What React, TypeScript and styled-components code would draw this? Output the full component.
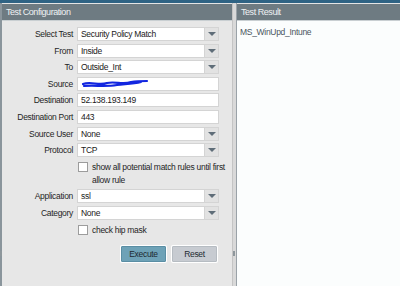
import React from 'react';
import styled, { createGlobalStyle } from 'styled-components';

const FONT = '"Liberation Sans", Arial, sans-serif';

/* GLOBAL */
const GlobalStyle = createGlobalStyle`
  * { box-sizing: border-box; }
  body {
    margin: 0;
    overflow: hidden;
    font-family: ${FONT};
    letter-spacing: -0.3px;
  }
`;

/* STYLES */
const Page = styled.div`
  width: 400px;
  height: 286px;
  display: flex;
  flex-direction: column;
  background: #e8e8e8;
`;

const TopBar = styled.div`
  height: 3px;
  background: #2f6384;
`;

const Panels = styled.div`
  flex: 1;
  display: flex;
`;

const LeftPanel = styled.div`
  width: 232px;
  display: flex;
  flex-direction: column;
  background: #e7e7e7;
  border-left: 2px solid #8a959c;
  position: relative;
`;

const Splitter = styled.div`
  width: 5px;
  background: #d9d9d9;
  border-left: 1px solid #c4c4c4;
  border-right: 1px solid #9aa2a8;
  position: relative;
`;

const RightPanel = styled.div`
  flex: 1;
  display: flex;
  flex-direction: column;
  background: #fbfdfd;
`;

const Header = styled.div`
  height: 18px;
  line-height: 16px;
  padding-left: 4px;
  background: #6e7b82;
  color: #eef2f4;
  font-size: 9px;
  letter-spacing: -0.45px;
  border-top: 1px solid #e4e4e4;
  border-bottom: 1px solid #c9cfd2;
`;

const Handle = styled.span`
  position: absolute;
  top: 248px;
  left: ${(p: { left: number }) => p.left}px;
  width: 2px;
  height: 5px;
  background: #8e979c;
`;

const Form = styled.div`
  display: grid;
  grid-template-columns: 71px 142px;
  column-gap: 4px;
  row-gap: 2.6px;
  padding: 6px 0 0 0;
  align-items: center;
`;

const Label = styled.label`
  text-align: right;
  font-size: 8.5px;
  color: #1f1f1f;
  white-space: nowrap;
`;

const Input = styled.div`
  height: 14px;
  border: 1px solid #d4d4d4;
  background: #fff;
  font-size: 8.5px;
  padding-left: 3px;
  color: #1a1a1a;
  display: flex;
  align-items: center;
  overflow: hidden;
`;

const Select = styled.div`
  height: 14px;
  display: flex;
  border: 1px solid #d4d4d4;
  background: #fff;
`;

const SelectValue = styled.span`
  flex: 1;
  font-size: 8.5px;
  line-height: 12px;
  padding-left: 3px;
  color: #1a1a1a;
`;

const Arrow = styled.span`
  width: 14px;
  background: #e2e2e2;
  border-left: 1px solid #d4d4d4;
  display: flex;
  align-items: center;
  justify-content: center;
  &::after {
    content: '';
    border-left: 4px solid transparent;
    border-right: 4px solid transparent;
    border-top: 4px solid #5f6d78;
  }
`;

const CheckRow = styled.div`
  grid-column: 2;
  display: flex;
  align-items: flex-start;
  gap: 4px;
  font-size: 8.5px;
  color: #1f1f1f;
  line-height: 13px;
  white-space: nowrap;
  padding: 1px 0 0 1px;
`;

const Box = styled.span`
  flex: none;
  width: 10px;
  height: 10px;
  margin-top: 1px;
  border: 1px solid #9c9c9c;
  background: #fff;
`;

const Buttons = styled.div`
  display: flex;
  justify-content: flex-end;
  gap: 6px;
  padding: 9px 15px 0 0;
`;

const Button = styled.button`
  width: 45px;
  height: 16px;
  padding: 0;
  font-family: ${FONT};
  font-size: 8.5px;
  letter-spacing: -0.3px;
  color: #1e2a32;
  border: 1px solid ${(p: { primary?: boolean }) => (p.primary ? '#5a8ea4' : '#b6bcc2')};
  background: ${(p: { primary?: boolean }) => (p.primary ? '#6ea2b7' : '#c7cbd1')};
  border-radius: 1px;
  box-shadow: 0 0 0 1px #fff;
`;

const Result = styled.div`
  padding: 6px 0 0 3px;
  font-size: 8.5px;
  color: #4a5560;
`;

/* COMPONENTS */
function SelectField({ value }: { value: string }) {
  return (
    <Select>
      <SelectValue>{value}</SelectValue>
      <Arrow />
    </Select>
  );
}

const Scribble = () => (
  <svg width="70" height="10" viewBox="0 0 70 10">
    <path
      d="M2 5 C10 2 18 7 26 4 C34 2 42 6 50 3 C56 2 62 2 66 2 M3 7 C14 6 24 8 36 6 C44 5 52 5 60 3"
      stroke="#1226e0"
      strokeWidth="2.2"
      fill="none"
      strokeLinecap="round"
    />
  </svg>
);

export default function App() {
  return (
    <Page>
      <GlobalStyle />
      <TopBar />
      <Panels>
        <LeftPanel>
          <Header>Test Configuration</Header>
          <Form>
            <Label>Select Test</Label>
            <SelectField value="Security Policy Match" />
            <Label>From</Label>
            <SelectField value="Inside" />
            <Label>To</Label>
            <SelectField value="Outside_Int" />
            <Label>Source</Label>
            <Input><Scribble /></Input>
            <Label>Destination</Label>
            <Input>52.138.193.149</Input>
            <Label>Destination Port</Label>
            <Input>443</Input>
            <Label>Source User</Label>
            <SelectField value="None" />
            <Label>Protocol</Label>
            <SelectField value="TCP" />
            <CheckRow>
              <Box />
              <span>show all potential match rules until first<br />allow rule</span>
            </CheckRow>
            <Label>Application</Label>
            <SelectField value="ssl" />
            <Label>Category</Label>
            <SelectField value="None" />
            <CheckRow>
              <Box />
              <span>check hip mask</span>
            </CheckRow>
          </Form>
          <Buttons>
            <Button primary>Execute</Button>
            <Button>Reset</Button>
          </Buttons>
          <Handle left={-2} />
        </LeftPanel>
        <Splitter>
          <Handle left={0} />
        </Splitter>
        <RightPanel>
          <Header>Test Result</Header>
          <Result>MS_WinUpd_Intune</Result>
        </RightPanel>
      </Panels>
    </Page>
  );
}
